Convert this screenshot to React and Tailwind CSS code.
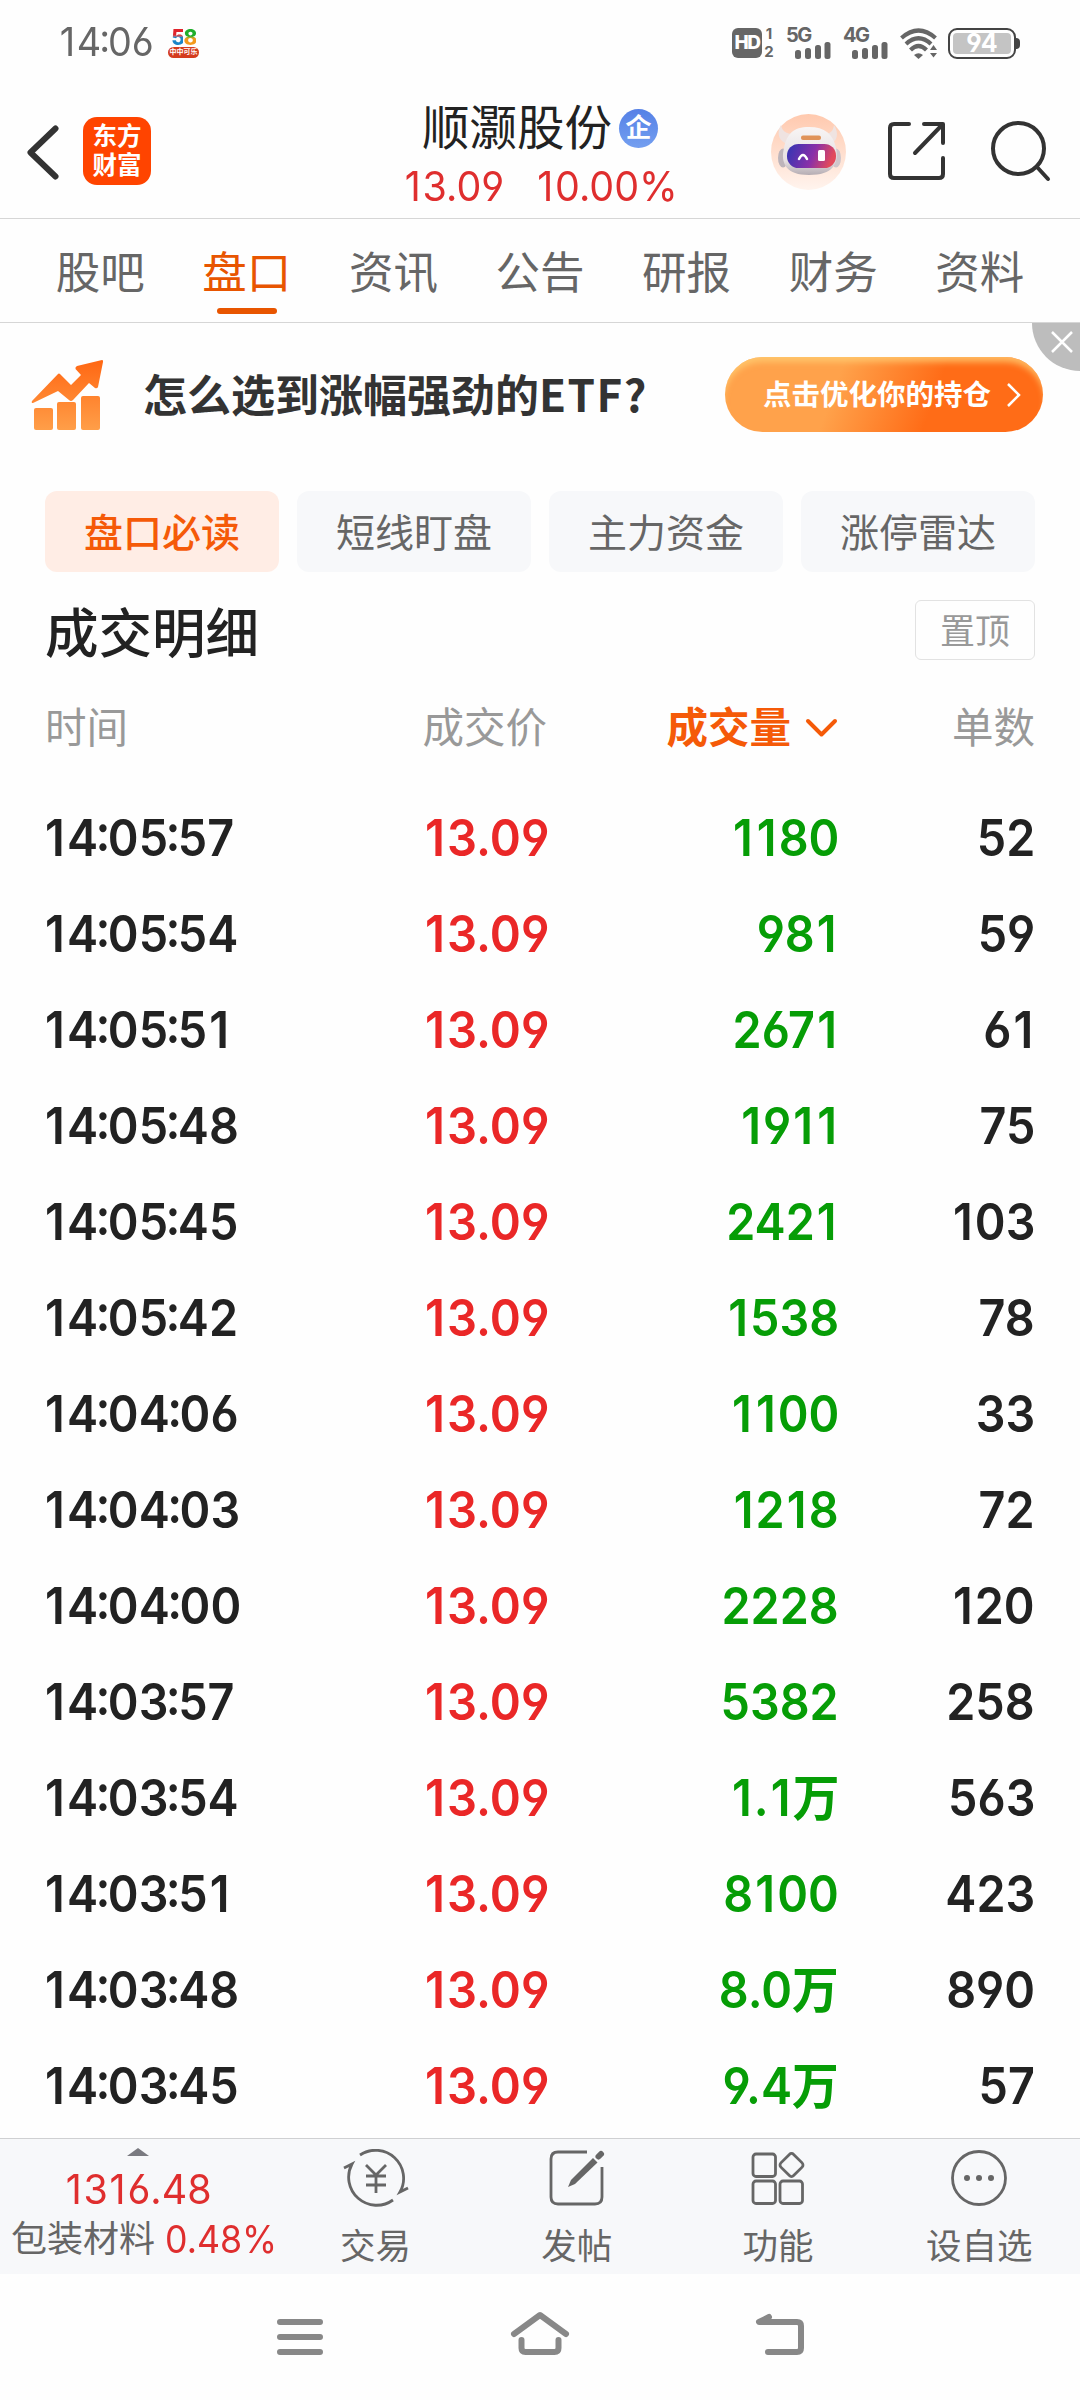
import React from "react";

const tabs = ["股吧", "盘口", "资讯", "公告", "研报", "财务", "资料"];
const chips = ["盘口必读", "短线盯盘", "主力资金", "涨停雷达"];

const trades = [
  { time: "14:05:57", price: "13.09", volume: "1180", count: "52" },
  { time: "14:05:54", price: "13.09", volume: "981", count: "59" },
  { time: "14:05:51", price: "13.09", volume: "2671", count: "61" },
  { time: "14:05:48", price: "13.09", volume: "1911", count: "75" },
  { time: "14:05:45", price: "13.09", volume: "2421", count: "103" },
  { time: "14:05:42", price: "13.09", volume: "1538", count: "78" },
  { time: "14:04:06", price: "13.09", volume: "1100", count: "33" },
  { time: "14:04:03", price: "13.09", volume: "1218", count: "72" },
  { time: "14:04:00", price: "13.09", volume: "2228", count: "120" },
  { time: "14:03:57", price: "13.09", volume: "5382", count: "258" },
  { time: "14:03:54", price: "13.09", volume: "1.1万", count: "563" },
  { time: "14:03:51", price: "13.09", volume: "8100", count: "423" },
  { time: "14:03:48", price: "13.09", volume: "8.0万", count: "890" },
  { time: "14:03:45", price: "13.09", volume: "9.4万", count: "57" },
];

const glyphClass = {
  1: "mx-[0.045em]",
  ":": "inline-block -mx-[0.055em] -translate-y-[0.09em]",
};

// narrow figures, with a little more room round "1" and a raised colon
const Num = ({ value, className = "scale-x-[0.95]" }) => (
  <span className={`inline-block ${className}`}>
    {value.split("").map((ch, i) => (
      <span key={i} className={glyphClass[ch]}>
        {ch}
      </span>
    ))}
  </span>
);

const Signal = ({ label }) => (
  <div className="relative w-[45px] h-[31px]">
    <span className="absolute left-0 top-0 text-[20px] leading-[15px] font-bold tracking-[-1.500px]">
      {label}
    </span>
    <svg className="absolute left-[9px] top-[14px]" width="36" height="17" viewBox="0 0 36 17" fill="#666">
      <rect x="0" y="8" width="6" height="9" rx="2.5" />
      <rect x="10" y="6" width="6" height="11" rx="2.5" />
      <rect x="20" y="3" width="6" height="14" rx="2.5" />
      <rect x="29.500" y="0" width="6" height="17" rx="2.5" />
    </svg>
  </div>
);

const StatusBar = () => (
  <div className="h-[84px] flex items-start text-[#666]">
    <div className="pl-[58px] pt-[22px] w-[168px] text-[39px] leading-10">
      <Num value="14:06" className="origin-left scale-x-[0.97]" />
    </div>
    <div className="mt-[29px] w-[31px] h-[31px] flex flex-col items-center">
      <div className="text-[21px] leading-[18px] font-extrabold tracking-[-1.500px]">
        <span className="bg-linear-to-b from-[#e0242c] from-40% to-[#1a86c8] to-50% bg-clip-text text-transparent">5</span>
        <span className="bg-linear-to-b from-[#1fae2c] from-45% to-[#f39a1c] to-55% bg-clip-text text-transparent">8</span>
      </div>
      <div className="w-[31px] h-[11px] rounded-full bg-[#d43c1e] text-white text-[7px] leading-[10px] text-center font-bold whitespace-nowrap">
        中中可乐
      </div>
    </div>
    <div className="ml-auto mt-[28px] flex items-start">
      <div className="w-[30px] h-[30px] rounded-md bg-[#666] text-white text-[19px] leading-[30px] font-extrabold text-center tracking-[-1.500px]">
        HD
      </div>
      <div className="-mt-[3px] ml-[2px] w-[10px] text-[15px] leading-[18px] font-bold text-center">
        <div>1</div>
        <div>2</div>
      </div>
      <div className="ml-[12px]">
        <Signal label="5G" />
      </div>
      <div className="ml-[12px]">
        <Signal label="4G" />
      </div>
      <svg className="ml-[12px]" width="38" height="31" viewBox="0 0 38 31" fill="none" stroke="#666" strokeWidth="4.200">
        <path d="M1.500 10 Q18.500 -5 35.500 10" />
        <path d="M6 16 Q18.500 4.500 31 16" />
        <path d="M10.500 22 Q18.500 14 26.500 22" />
        <path d="M14 27 Q18.500 23.500 23 27 L18.500 31Z" fill="#666" stroke="none" />
        <path d="M33.500 17 L37 22 H30Z M33.500 29.500 L37 25 H30Z" fill="#666" stroke="none" />
      </svg>
      <div className="ml-[10px] w-[68px] h-[31px] rounded-[9px] border-2 border-[#444] p-[3px]">
        <div className="h-full rounded-[4px] bg-[#c4c4c4] text-white text-[25px] leading-[21px] font-bold text-center">
          94
        </div>
      </div>
      <div className="mt-[10px] mr-[60px] w-[4px] h-[11px] rounded-r bg-[#444]" />
    </div>
  </div>
);

const Robot = () => (
  <svg width="75" height="76" viewBox="0 0 75 76">
    <defs>
      <linearGradient id="halo" x1="0" y1="0" x2="0" y2="1">
        <stop offset="0" stopColor="#ffc9ae" />
        <stop offset="1" stopColor="#fff4ee" />
      </linearGradient>
      <linearGradient id="visor" x1="0" y1="0" x2="1" y2="0.2">
        <stop offset="0" stopColor="#2f35b4" />
        <stop offset="0.6" stopColor="#8a2fa8" />
        <stop offset="1" stopColor="#e24a5c" />
      </linearGradient>
      <linearGradient id="shell" x1="0" y1="0" x2="0" y2="1">
        <stop offset="0" stopColor="#f8f5f5" />
        <stop offset="0.7" stopColor="#e6e0e2" />
        <stop offset="1" stopColor="#b5adb3" />
      </linearGradient>
    </defs>
    <ellipse cx="37.500" cy="38" rx="37.500" ry="38" fill="url(#halo)" />
    <path d="M10 11 C5 19 8 28 17 30 L23 20 C15 20 11 17 10 11Z" fill="#efe3e1" />
    <path d="M63 11 C68 19 67 28 58 30 L52 20 C60 20 62 17 63 11Z" fill="#efe3e1" />
    <ellipse cx="12" cy="44" rx="5" ry="9.500" fill="#bdb4ba" />
    <ellipse cx="65" cy="44" rx="5" ry="9.500" fill="#cfc6cb" />
    <path d="M38 13 C54 13 62 20 65 34 C68 50 62 61 38 61 C16 61 9 50 13 34 C16 20 22 13 38 13Z" fill="url(#shell)" />
    <rect x="30" y="21.500" width="20" height="4.500" rx="2" fill="#e0935a" />
    <rect x="16" y="30" width="49" height="24" rx="11.500" fill="url(#visor)" />
    <path d="M28 45 Q32 37 36 45" fill="none" stroke="#fff" strokeWidth="2.500" strokeLinecap="round" />
    <rect x="47" y="36" width="7" height="11" rx="1.500" fill="#fff" />
  </svg>
);

const Header = () => (
  <div className="h-[135px] border-b border-[#d6d6d6] flex">
    <div className="w-[360px] flex pt-[33px] pl-[27px]">
      <svg className="mt-[8px]" width="32" height="55" viewBox="0 0 32 55" fill="none" stroke="#333" strokeWidth="6" strokeLinecap="round" strokeLinejoin="round">
        <path d="M28.500 3.500 L3.500 27.500 L28.500 51.500" />
      </svg>
      <div className="ml-[24px] w-[68px] h-[68px] rounded-[14px] bg-[#ff4400] text-white font-bold text-[24.500px] leading-[29px] text-center pt-[5px]">
        东方
        <br />
        财富
      </div>
    </div>
    <div className="w-[360px] flex flex-col items-center">
      <div className="mt-[16px] h-[56px] flex items-center text-[#222]">
        <span className="text-[47.500px] leading-[58px]">顺灏股份</span>
        <span className="ml-[7px] w-[39px] h-[39px] rounded-full bg-linear-to-b from-[#5580e6] to-[#749ff0] text-white text-[26px] leading-[37px] font-bold text-center">
          企
        </span>
      </div>
      <div className="flex w-[275px] justify-between text-[41.500px] leading-[60px] text-[#df2e2e]">
        <Num value="13.09" className="origin-left scale-x-[0.95]" />
        <Num value="10.00%" className="origin-right scale-x-[0.95]" />
      </div>
    </div>
    <div className="w-[360px] flex pl-[51px]">
      <div className="mt-[30px]">
        <Robot />
      </div>
      <svg className="ml-[41px] mt-[37px]" width="60" height="60" viewBox="0 0 60 60" fill="none" stroke="#333" strokeWidth="4" strokeLinecap="round" strokeLinejoin="round">
        <path d="M22 3 H7 Q3 3 3 7 V53 Q3 57 7 57 H52 Q56 57 56 53 V37" />
        <path d="M37 3 H56 V22 M55 4 L28 32" />
      </svg>
      <svg className="ml-[44px] mt-[36px]" width="60" height="62" viewBox="0 0 60 62" fill="none" stroke="#333" strokeWidth="4" strokeLinecap="round">
        <circle cx="27.500" cy="28.500" r="25.500" />
        <path d="M46 47 L57 59" />
      </svg>
    </div>
  </div>
);

const Tabs = () => (
  <div className="h-[104px] border-b border-[#d6d6d6] flex px-[27px] text-[44.500px] leading-[56px] text-[#666]">
    {tabs.map((tab) => (
      <div key={tab} className="flex-1 flex flex-col items-center pt-[26px]">
        <span className={tab === "盘口" ? "text-[#e85500]" : ""}>{tab}</span>
        {tab === "盘口" && (
          <span className="mt-[7px] w-[60px] h-[6px] rounded-full bg-[#e85500]" />
        )}
      </div>
    ))}
  </div>
);

const Banner = () => (
  <div className="relative h-[168px] flex pl-[31px]">
    <svg className="mt-[36px]" width="73" height="73" viewBox="0 0 73 73">
      <defs>
        <linearGradient id="rise" gradientUnits="userSpaceOnUse" x1="0" y1="0" x2="0" y2="73">
          <stop offset="0" stopColor="#ff6612" />
          <stop offset="1" stopColor="#ffa04a" />
        </linearGradient>
      </defs>
      <g fill="url(#rise)">
        <path d="M1 42 L27 15 Q28 14 29.500 15.500 L40 26 L50 16 L44.500 10 Q44 8 46 7 L71 1 Q72.500 1 72 3 L67 28 Q66 30 64 29 L58 24 L42 41 Q40 43 38 41 L27 32 L2 44 Q0 44 1 42Z" />
        <rect x="3" y="49" width="19" height="22" rx="2" />
        <rect x="26" y="43" width="19" height="28" rx="2" />
        <rect x="50" y="37" width="19" height="34" rx="2" />
      </g>
    </svg>
    <div className="ml-[39px] mt-[40px] w-[582px] font-['Noto_Sans_CJK_SC',sans-serif] text-[44px] leading-[60px] font-bold text-[#333] whitespace-nowrap">
      怎么选到涨幅强劲的<span className="tracking-[1.500px]">ETF?</span>
    </div>
    <div className="mt-[34px] w-[318px] h-[75px] rounded-full bg-linear-[110deg] from-[#ffa24b] from-35% to-[#ff6c17] to-65% shadow-[inset_0_7px_6px_-2px_rgba(255,205,115,0.8)] flex items-center pl-[38px] text-white">
      <span className="text-[28.500px] font-bold leading-[40px]">点击优化你的持仓</span>
      <svg className="ml-[15px]" width="16" height="26" viewBox="0 0 16 26" fill="none" stroke="#fff" strokeWidth="2.500">
        <path d="M2 2 L13 13 L2 24" />
      </svg>
    </div>
    <div className="absolute right-0 top-0 w-[48px] h-[48px] rounded-bl-full bg-[#bdbdbd]">
      <svg className="absolute left-[19px] top-[8px]" width="22" height="22" viewBox="0 0 22 22" stroke="#fff" strokeWidth="2.500">
        <path d="M1 1 L21 21 M21 1 L1 21" />
      </svg>
    </div>
  </div>
);

const TradeList = () => (
  <div className="px-[45px]">
    <div className="grid grid-cols-4 gap-[18px]">
      {chips.map((chip, i) => (
        <div
          key={chip}
          className={`h-[81px] rounded-xl text-[39px] leading-[84px] text-center ${
            i === 0
              ? "bg-[#ffede5] text-[#f55a08] font-medium"
              : "bg-[#f7f8fa] text-[#666]"
          }`}
        >
          {chip}
        </div>
      ))}
    </div>

    <div className="h-[117px] pt-[28px] flex justify-between">
      <h2 className="text-[53.500px] leading-[68px] font-medium text-[#222]">成交明细</h2>
      <div className="w-[120px] h-[60px] border border-[#e2e2e2] rounded-md text-center text-[35px] leading-[61px] text-[#999]">
        置顶
      </div>
    </div>

    {/* Column titles */}
    <div className="h-[100px] pt-[9px] flex items-start text-[41.500px] leading-[60px] text-[#999]">
      <div className="w-[252px]">时间</div>
      <div className="w-[250px] text-right">成交价</div>
      <div className="w-[291px] flex justify-end items-center text-[#f55a08] font-bold">
        成交量
        <svg className="ml-[14px]" width="33" height="20" viewBox="0 0 33 20" fill="none" stroke="#f55a08" strokeWidth="4" strokeLinecap="round" strokeLinejoin="round">
          <path d="M3 3 L16.500 16.500 L30 3" />
        </svg>
      </div>
      <div className="flex-1 text-right">单数</div>
    </div>

    {trades.map((t) => (
      <div
        key={t.time}
        className="h-24 flex text-[50.500px] leading-[97px] font-semibold text-[#222]"
      >
        <div className="w-[252px] -ml-[2px] mr-[2px] whitespace-nowrap">
          <Num value={t.time} className="origin-left scale-x-[0.925]" />
        </div>
        <div className="w-[252px] text-right text-[#ea2727]">
          <Num value={t.price} className="origin-right scale-x-[0.935]" />
        </div>
        <div className="w-[290px] text-right text-[#069d06]">
          <Num value={t.volume} className="origin-right scale-x-[0.925]" />
        </div>
        <div className="flex-1 text-right">
          <Num value={t.count} className="origin-right scale-x-[0.925]" />
        </div>
      </div>
    ))}
  </div>
);

const actions = [
  {
    label: "交易",
    icon: (
      <>
        <path d="M17 6 A28 28 0 0 1 57 43 L65 39" />
        <path d="M50 51 A28 28 0 0 1 9 15 L1 19" />
        <path d="M23 16 L33 26 L43 16 M33 26 V44 M23 27 H43 M23 36 H43" />
      </>
    ),
  },
  {
    label: "发帖",
    icon: (
      <>
        <path d="M43 3 H14 Q7 3 7 10 V48 Q7 55 14 55 H51 Q58 55 58 48 V18" />
        <path d="M24 38 L27 31 L49 9 L53.500 13.500 L31 35Z" fill="#666" stroke="none" />
        <path d="M54.500 7.500 L57 5" strokeWidth="6" strokeLinecap="round" />
      </>
    ),
  },
  {
    label: "功能",
    icon: (
      <>
        <rect x="8" y="5" width="22.500" height="22.500" rx="3" />
        <rect x="8" y="32" width="22.500" height="22.500" rx="3" />
        <rect x="35" y="32" width="22.500" height="22.500" rx="3" />
        <rect x="37.500" y="7" width="18" height="18" rx="3" transform="rotate(45 46.500 16)" />
      </>
    ),
  },
  {
    label: "设自选",
    icon: (
      <>
        <circle cx="33" cy="29" r="26.500" />
        <g fill="#666" stroke="none">
          <circle cx="21" cy="29" r="3" />
          <circle cx="33" cy="29" r="3" />
          <circle cx="45" cy="29" r="3" />
        </g>
      </>
    ),
  },
];

const Footer = () => (
  <div className="h-[136px] border-t border-[#cfd0d2] bg-[#f7f8fa] flex text-[#666]">
    <div className="w-[275px] flex flex-col items-center">
      <svg className="mt-[9px]" width="22" height="8" viewBox="0 0 22 8" fill="#7a7a80">
        <path d="M11 0 L22 8 H0Z" />
      </svg>
      <div className="mt-[9px] text-[41.500px] leading-[48px] text-[#df2e2e]">
        <Num value="1316.48" />
      </div>
      <div className="mt-px w-full pl-[11px] flex text-[36px] leading-[50px] whitespace-nowrap">
        包装材料
        <Num value="0.48%" className="ml-[10px] origin-left scale-x-[0.94] text-[38px] text-[#df2e2e]" />
      </div>
    </div>
    {actions.map((a) => (
      <div key={a.label} className="flex-1 flex flex-col items-center">
        <svg className="mt-[10px]" width="66" height="58" viewBox="0 0 66 58" fill="none" stroke="#666" strokeWidth="2.800">
          {a.icon}
        </svg>
        <span className="mt-[15px] text-[35.500px] leading-[50px]">{a.label}</span>
      </div>
    ))}
  </div>
);

const NavBar = () => (
  <div className="h-[126px] flex justify-center pt-[36px] gap-[180px]">
    <svg width="60" height="50" viewBox="0 0 60 50" stroke="#888" strokeWidth="6" strokeLinecap="round">
      <path d="M10 12 H50 M10 27 H50 M10 42 H50" />
    </svg>
    <svg width="60" height="50" viewBox="0 0 60 50" fill="none" stroke="#888" strokeWidth="6" strokeLinecap="round" strokeLinejoin="round">
      <path d="M4 24 L30 5 L56 24 M11.500 30 V38 Q11.500 42 15.500 42 H44.500 Q48.500 42 48.500 38 V30" />
    </svg>
    <svg width="60" height="50" viewBox="0 0 60 50" fill="none" stroke="#888" strokeWidth="6" strokeLinecap="round" strokeLinejoin="round">
      <path d="M19 7 L9 12 H47 Q51 12 51 16 V38 Q51 42 47 42 H18" />
    </svg>
  </div>
);

const App = () => {
  return (
    <div className="w-[1080px] h-[2400px] overflow-hidden bg-[#fefefe] flex flex-col font-['Inter','Noto_Sans_CJK_SC',sans-serif] [font-feature-settings:'cv03','cv04']">
      <StatusBar />
      <Header />
      <Tabs />
      <Banner />
      <TradeList />
      <div className="mt-auto">
        <Footer />
        <NavBar />
      </div>
    </div>
  );
};

export default App;
